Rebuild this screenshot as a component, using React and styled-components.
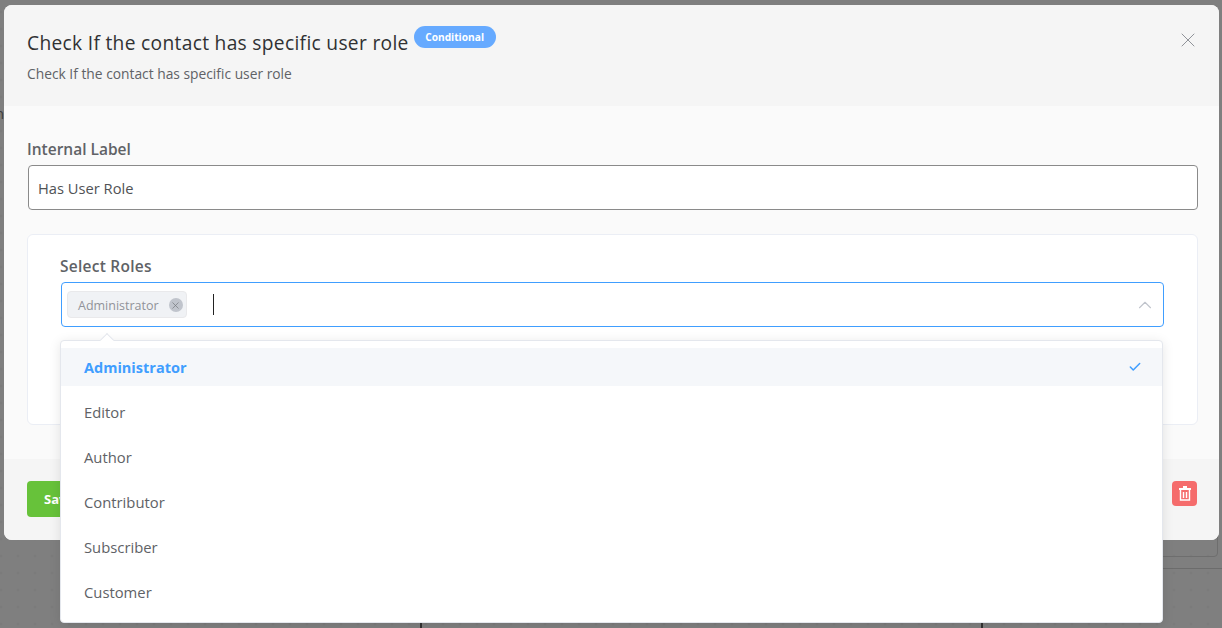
import React from 'react';
import styled, { createGlobalStyle } from 'styled-components';
import { X, ChevronUp, Check } from 'lucide-react';

const GlobalStyle = createGlobalStyle`
  html, body {
    margin: 0;
    padding: 0;
    height: 100%;
    overflow: hidden;
  }
  body {
    font-family: "Open Sans", "Noto Sans", sans-serif;
    color: #606266;
  }
`;

const Backdrop = styled.div`
  position: relative;
  width: 1222px;
  height: 628px;
  box-sizing: border-box;
  padding: 5px 3px 0 4px;
  overflow: hidden;
  background-color: #7f7f7f;
  background-image: radial-gradient(circle, #797979 1px, transparent 1.2px);
  background-size: 17px 17px;
  background-position: -7.5px 3.5px;
`;

const CanvasNode = styled.div`
  position: absolute;
  left: 420px;
  top: 568px;
  width: 563px;
  height: 80px;
  box-sizing: border-box;
  border-left: 2px solid #333;
  border-right: 2px solid #333;
`;

const CanvasRule = styled.div`
  position: absolute;
  left: 1000px;
  right: 0;
  top: 568px;
  height: 1px;
  background: #6c6c6c;
`;

const CanvasPanel = styled.div`
  position: absolute;
  left: 1000px;
  right: 4px;
  top: 500px;
  height: 57px;
  box-sizing: border-box;
  border: 1px solid #6e6e6e;
  border-radius: 4px;
`;

const CanvasText = styled.span`
  position: absolute;
  left: -5px;
  top: 103px;
  font-size: 15px;
  color: #3c3c3c;
`;

const Modal = styled.div`
  position: relative;
  height: 535px;
  border-radius: 8px;
  background: #fafafa;
  display: flex;
  flex-direction: column;
  overflow: hidden;
`;

const Header = styled.div`
  height: 101px;
  box-sizing: border-box;
  padding: 21px 23px 0;
  background: #f5f5f5;
  position: relative;
`;

const TitleRow = styled.div`
  display: flex;
  align-items: flex-start;
  gap: 5px;
`;

const Title = styled.h3`
  margin: 0;
  font-size: 19.2px;
  line-height: 34px;
  font-weight: 500;
  color: #303133;
  letter-spacing: 0.31px;
`;

const Badge = styled.span`
  display: inline-block;
  height: 22px;
  line-height: 23px;
  padding: 0 11.5px;
  border-radius: 11px;
  background: #66aaff;
  color: #fff;
  font-size: 10.2px;
  font-weight: 700;
`;

const Subtitle = styled.p`
  margin: 4px 0 0;
  font-size: 13.8px;
  line-height: 20px;
  color: #606266;
`;

const CloseButton = styled.button`
  position: absolute;
  top: 23px;
  right: 19px;
  width: 24px;
  height: 24px;
  padding: 0;
  border: 0;
  background: none;
  color: #909399;
  display: flex;
  align-items: center;
  justify-content: center;
`;

const Body = styled.div`
  height: 353px;
  box-sizing: border-box;
  padding: 28px 21px 0 23px;
`;

const Label = styled.label`
  display: block;
  font-size: 15.5px;
  line-height: 31px;
  font-weight: 600;
  color: #606266;
`;

const RolesLabel = styled(Label)`
  letter-spacing: 0.25px;
`;

const TextField = styled.div`
  height: 45px;
  margin-left: 1px;
  box-sizing: border-box;
  border: 1px solid #8a8a8a;
  border-radius: 4px;
  background: #fff;
  display: flex;
  align-items: center;
  padding: 1px 9px 0;
  font-size: 14.7px;
  color: #505255;
`;

const Card = styled.div`
  height: 191px;
  margin-top: 24px;
  box-sizing: border-box;
  padding: 16px 33px 0 32px;
  background: #fff;
  border: 1px solid #ebeef5;
  border-radius: 6px;
`;

const SelectBox = styled.div`
  height: 45px;
  margin-left: 1px;
  box-sizing: border-box;
  border: 1px solid #409eff;
  border-radius: 4px;
  background: #fff;
  display: flex;
  align-items: center;
  padding: 0 7px 0 5px;
`;

const Tag = styled.span`
  display: inline-flex;
  align-items: center;
  height: 27px;
  box-sizing: border-box;
  padding: 1px 3px 0 10px;
  gap: 10px;
  background: #f0f2f5;
  border: 1px solid #e9e9eb;
  border-radius: 4px;
  font-size: 12.5px;
  color: #909399;
`;

const TagClose = styled.span`
  width: 14px;
  height: 14px;
  border-radius: 50%;
  background: #c0c4cc;
  color: #73767a;
  display: flex;
  align-items: center;
  justify-content: center;
`;

const Caret = styled.span`
  width: 1px;
  height: 21px;
  margin-left: 26px;
  background: #222;
`;

const SelectArrow = styled.span`
  margin-left: auto;
  color: #c0c4cc;
  display: flex;
`;

const Footer = styled.div`
  flex: 1;
  background: #f5f5f5;
  display: flex;
  align-items: flex-start;
  justify-content: space-between;
  padding: 22px 22px 0 23px;
`;

const SaveButton = styled.button`
  height: 36px;
  width: 118px;
  border: 0;
  border-radius: 4px;
  background: #67c23a;
  color: #fff;
  font: 700 13px "Open Sans", sans-serif;
  text-align: left;
  padding: 0 0 0 17px;
`;

const DeleteButton = styled.button`
  width: 25px;
  height: 25px;
  padding: 0;
  border: 0;
  border-radius: 4px;
  background: #f56c6c;
  color: #fff;
  display: flex;
  align-items: center;
  justify-content: center;
`;

const Dropdown = styled.ul`
  position: absolute;
  left: 60px;
  top: 340px;
  width: 1103px;
  height: 283px;
  box-sizing: border-box;
  padding: 7px 0 0;
  background: #fff;
  border: 1px solid #e4e7ed;
  border-radius: 4px;
  box-shadow: 0 2px 12px rgba(0, 0, 0, 0.1);
  list-style: none;
  margin: 0;

  &::before {
    content: '';
    position: absolute;
    top: -6px;
    left: 41px;
    width: 9px;
    height: 9px;
    background: #fff;
    border-left: 1px solid #e4e7ed;
    border-top: 1px solid #e4e7ed;
    transform: rotate(45deg);
  }
`;

const Option = styled.li`
  position: relative;
  height: ${props => (props.$selected ? '38px' : '45px')};
  margin-bottom: ${props => (props.$selected ? '4px' : '0')};
  padding: 0 20px ${props => (props.$selected ? '0' : '2px')} 23px;
  box-sizing: border-box;
  display: flex;
  align-items: center;
  justify-content: space-between;
  font-size: ${props => (props.$selected ? '14.5px' : '14.8px')};
  font-weight: ${props => (props.$selected ? 700 : 400)};
  color: ${props => (props.$selected ? '#409eff' : '#606266')};
  background: ${props => (props.$selected ? '#f5f7fa' : 'transparent')};
`;

const TrashIcon = () => (
  <svg width="14" height="15" viewBox="0 0 14 15" fill="none">
    <path d="M5 1h4M1 3h12" stroke="currentColor" strokeWidth="1.8" />
    <path d="M2.5 4v10h9V4" stroke="currentColor" strokeWidth="1.4" />
    <path d="M5.5 6v6M8.5 6v6" stroke="currentColor" strokeWidth="1.4" />
  </svg>
);

const roles = ['Administrator', 'Editor', 'Author', 'Contributor', 'Subscriber', 'Customer'];

export default function App() {
  return (
    <>
      <GlobalStyle />
      <Backdrop>
        <CanvasText>n</CanvasText>
        <CanvasPanel />
        <CanvasNode />
        <CanvasRule />
        <Modal>
          <Header>
            <TitleRow>
              <Title>Check If the contact has specific user role</Title>
              <Badge>Conditional</Badge>
            </TitleRow>
            <Subtitle>Check If the contact has specific user role</Subtitle>
            <CloseButton aria-label="Close">
              <X size={24} strokeWidth={1} />
            </CloseButton>
          </Header>
          <Body>
            <Label>Internal Label</Label>
            <TextField>Has User Role</TextField>
            <Card>
              <RolesLabel>Select Roles</RolesLabel>
              <SelectBox>
                <Tag>
                  Administrator
                  <TagClose>
                    <X size={11} strokeWidth={1.5} />
                  </TagClose>
                </Tag>
                <Caret />
                <SelectArrow>
                  <ChevronUp size={22} strokeWidth={1.2} />
                </SelectArrow>
              </SelectBox>
            </Card>
          </Body>
          <Footer>
            <SaveButton>Save</SaveButton>
            <DeleteButton aria-label="Delete">
              <TrashIcon />
            </DeleteButton>
          </Footer>
        </Modal>
        <Dropdown>
          {roles.map((role, i) => (
            <Option key={role} $selected={i === 0}>
              {role}
              {i === 0 && <Check size={14} strokeWidth={2.6} />}
            </Option>
          ))}
        </Dropdown>
      </Backdrop>
    </>
  );
}
